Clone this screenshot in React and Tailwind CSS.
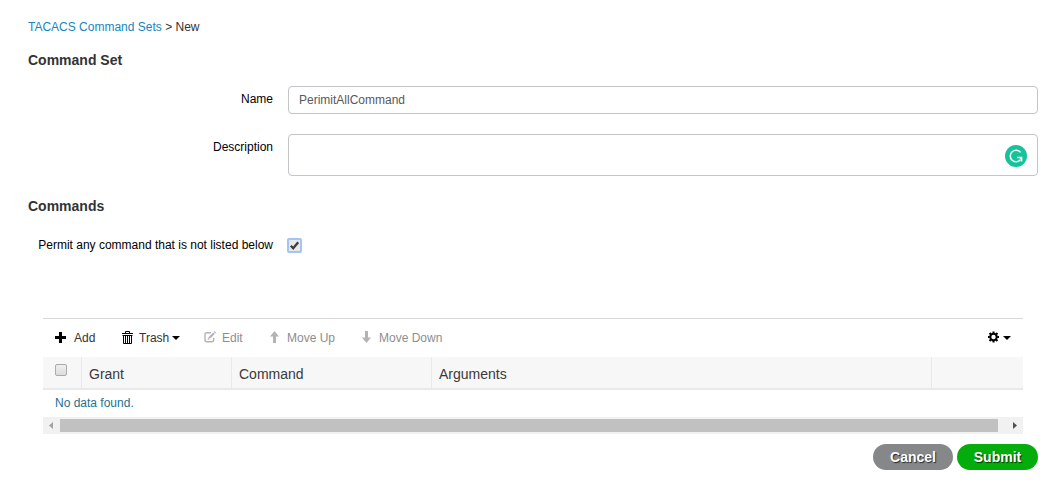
import React from 'react';

const FieldLabel = ({ children, className = '' }) => (
  <label className={`w-[253px] shrink-0 pr-2 text-right text-black ${className}`}>{children}</label>
);

const Caret = () => (
  <svg width="8" height="4" viewBox="0 0 8 4" fill="currentColor">
    <path d="M0 0h8L4 4z" />
  </svg>
);

const PlusIcon = () => (
  <svg width="11" height="11" viewBox="0 0 11 11" fill="currentColor">
    <path d="M4 0h3v4h4v3H7v4H4V7H0V4h4z" />
  </svg>
);

const TrashIcon = () => (
  <svg width="11" height="13" viewBox="0 0 11 13" fill="none" stroke="currentColor">
    <path d="M0 2.5h11M3.5 2V.5h4V2M1.5 4v8.5h8V4M0.5 4.5h10M3.5 5v7M5.5 5v7M7.5 5v7" />
  </svg>
);

const EditIcon = () => (
  <svg width="12" height="12" viewBox="0 0 12 12" fill="none" stroke="currentColor">
    <path d="M7 1.7H3Q1 1.7 1 3.7v5.1q0 2 2 2h4.7q2 0 2-2V7" strokeWidth="1.4" />
    <path d="M5.2 7 10 2.2" strokeWidth="2" />
    <path d="M10 .5 11.7 2.2" strokeWidth="1.2" />
    <path d="M3.6 8.7 4.1 6.4l1.9 1.8z" fill="currentColor" stroke="none" />
  </svg>
);

const ArrowIcon = ({ down }) => (
  <svg
    width="9"
    height="12"
    viewBox="0 0 9 12"
    fill="currentColor"
    className={down ? 'rotate-180' : ''}
  >
    <path d="M4.5 0 9 5.5H6V12H3V5.5H0z" />
  </svg>
);

const GearIcon = () => (
  <svg width="11" height="12" viewBox="0 0 12 12" fill="none" stroke="currentColor">
    <circle cx="6" cy="6" r="3.5" strokeWidth="2.2" />
    <path
      d="M6 0v2M6 10v2M0 6h2M10 6h2M1.7 1.7l1.5 1.5M8.8 8.8l1.5 1.5M1.7 10.3l1.5-1.5M8.8 3.2l1.5-1.5"
      strokeWidth="2.2"
    />
  </svg>
);

const AssistantBadge = () => (
  <svg
    width="22"
    height="22"
    viewBox="0 0 22 22"
    fill="none"
    className="absolute top-[10px] right-[10px]"
  >
    <circle cx="11" cy="11" r="11" fill="#15c39a" />
    <path d="M15.6 7.4A5.8 5.8 0 1 0 15.6 14.6" stroke="#fff" strokeWidth="1.5" />
    <path d="M12 12.6h4.6v4" stroke="#fff" strokeWidth="1.5" />
    <path d="M14 12.6h3v3z" fill="#fff" />
  </svg>
);

const columns = [
  { name: 'Grant', width: 'w-[150px]' },
  { name: 'Command', width: 'w-[200px]' },
  { name: 'Arguments', width: 'w-[500px]' },
  { name: '', width: 'flex-1' },
];

const App = () => {
  return (
    <div className="h-[484px] w-[1060px] overflow-hidden bg-white pl-7 font-['Liberation_Sans',Arial,sans-serif] text-xs text-[#333]">
      <div className="pt-[19px] leading-4">
        <a className="text-[#1586bf]">TACACS Command Sets</a> &gt; New
      </div>

      <h2 className="mt-[15px] text-sm leading-5 font-bold">Command Set</h2>
      <div className="mt-4 flex">
        <FieldLabel className="pt-[5px] leading-4">Name</FieldLabel>
        <div className="ml-[7px] h-7 w-[750px] rounded border border-[#c4c5c9] pt-[5px] pl-[10px] leading-4 text-[#58585b]">
          PerimitAllCommand
        </div>
      </div>
      <div className="mt-5 flex">
        <FieldLabel className="pt-[5px] leading-4">Description</FieldLabel>
        <div className="relative ml-[7px] h-[42px] w-[750px] rounded border border-[#c4c5c9]">
          <AssistantBadge />
        </div>
      </div>

      <h2 className="mt-5 text-sm leading-5 font-bold">Commands</h2>
      <div className="mt-[21px] flex h-4">
        <FieldLabel className="leading-4">Permit any command that is not listed below</FieldLabel>
        <div className="mt-px ml-[6px] h-[15px] w-[15px] rounded-[2px] bg-[#a5c3f5] p-[2px]">
          <svg width="11" height="11" viewBox="0 0 11 11" className="bg-[#e8e8e8]">
            <path d="M1.8 5.8 4.2 8.2 9.2 2.2" fill="none" stroke="#3d3d3d" strokeWidth="2.3" />
          </svg>
        </div>
      </div>

      <div className="mt-[65px] ml-[15px] w-[980px] border-t border-[#d8d8d8]">
        <div className="flex h-[38px] items-center pl-3 leading-4">
          <span className="flex w-[67px] items-center gap-2">
            <span className="pb-px text-black"><PlusIcon /></span>
            Add
          </span>
          <span className="flex w-[82px] items-center">
            <span className="mr-[6px] pb-[2px] text-black"><TrashIcon /></span>
            Trash
            <span className="ml-[3px] text-black"><Caret /></span>
          </span>
          <span className="flex w-[66px] items-center gap-[6px] text-[#8e8e8e]">
            <span className="pb-[2px] text-[#b3b3b3]"><EditIcon /></span>
            Edit
          </span>
          <span className="flex w-[92px] items-center gap-2 text-[#8e8e8e]">
            <span className="pb-[2px] text-[#b3b3b3]"><ArrowIcon /></span>
            Move Up
          </span>
          <span className="flex items-center gap-2 text-[#8e8e8e]">
            <span className="pb-[2px] text-[#b3b3b3]"><ArrowIcon down /></span>
            Move Down
          </span>
          <span className="mr-3 ml-auto flex items-center gap-1 text-black">
            <span className="pb-[2px]"><GearIcon /></span>
            <Caret />
          </span>
        </div>

        <div className="flex h-[33px] border-b-2 border-[#e9e9e9] bg-[#f7f7f7] text-sm text-[#39393b]">
          <div className="w-[38px] pt-[7px] pl-3">
            <div className="h-3 w-3 rounded-[2px] border border-[#aaa] bg-linear-to-b from-[#efefef] to-[#dcdcdc]" />
          </div>
          {columns.map((col) => (
            <div
              key={col.width}
              className={`border-l border-[#e9e9e9] pt-[7px] pl-[7px] leading-5 ${col.width}`}
            >
              {col.name}
            </div>
          ))}
        </div>
        <div className="h-[27px] pt-[5px] pl-3 leading-4 text-[#26708f]">No data found.</div>

        <div className="flex h-[17px] items-center bg-[#f1f1f1]">
          <span className="flex w-[17px] pl-[6px] text-[#a3a3a3]">
            <svg width="4" height="7" viewBox="0 0 4 7" fill="currentColor">
              <path d="M4 0v7L0 3.5z" />
            </svg>
          </span>
          <div className="h-[13px] w-[938px] bg-[#c1c1c1]" />
          <span className="ml-[15px] text-[#505050]">
            <svg width="4" height="7" viewBox="0 0 4 7" fill="currentColor">
              <path d="M0 0v7l4-3.5z" />
            </svg>
          </span>
        </div>
      </div>

      <div className="mt-[10px] flex w-[1010px] justify-end gap-1 text-sm leading-[26px] font-bold text-white">
        <button className="h-[26px] w-20 rounded-full bg-[#868789] [text-shadow:1px_1px_1px_rgba(0,0,0,0.7)]">
          Cancel
        </button>
        <button className="h-[26px] w-[81px] rounded-full bg-[#04ad0c] [text-shadow:1px_1px_1px_rgba(0,0,0,0.7)]">
          Submit
        </button>
      </div>
    </div>
  );
};

export default App;
